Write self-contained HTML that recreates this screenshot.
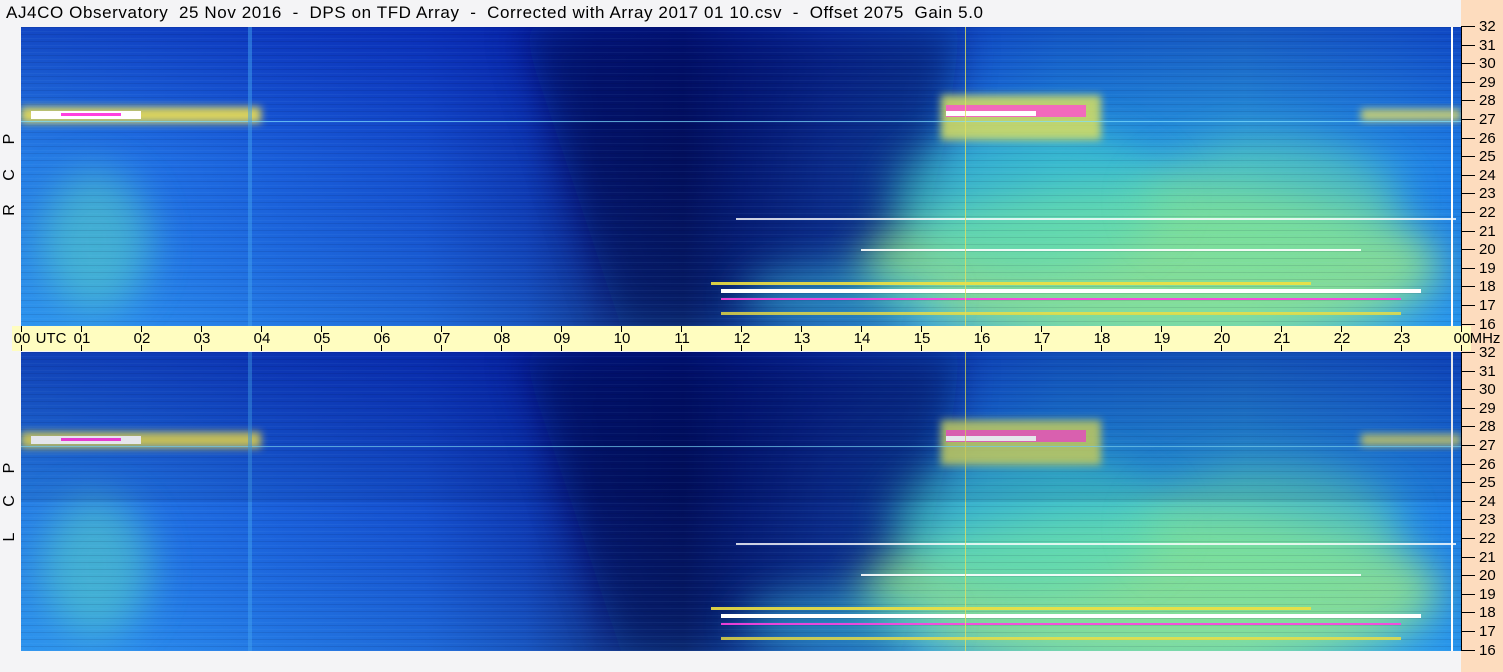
<!DOCTYPE html>
<html><head><meta charset="utf-8">
<style>
html,body{margin:0;padding:0}
body{width:1503px;height:672px;background:#f4f4f6;position:relative;overflow:hidden;font-family:"Liberation Sans",sans-serif;color:#000}
.title{position:absolute;left:6px;top:3px;font-size:17px;white-space:pre;letter-spacing:0.6px}
.panel{position:absolute;left:21px;width:1440px;height:299px}
.peach{position:absolute;left:1461px;top:0;width:42px;height:672px;background:#fddcbe}
.vline{position:absolute;left:1461px;width:1px;background:#000}
.tick{position:absolute;left:1461px;width:14px;height:1px;background:#000}
.lab{position:absolute;left:1479px;font-size:15px;line-height:15px}
.band{position:absolute;left:12px;top:326px;width:1459px;height:25px;background:#fffdc0}
.ht{position:absolute;font-size:15px;top:330px;transform:translateX(-50%)}
.hk{position:absolute;width:1px;background:#000}
.side{position:absolute;left:2px;font-size:16px;transform:rotate(-90deg);width:16px;text-align:center}
</style></head><body>
<div class="title">AJ4CO Observatory  25 Nov 2016  -  DPS on TFD Array  -  Corrected with Array 2017 01 10.csv  -  Offset 2075  Gain 5.0</div>
<div class="peach"></div>

<svg width="0" height="0" style="position:absolute">
<defs>
<linearGradient id="hg" x1="0" x2="1" y1="0" y2="0">
<stop offset="0" stop-color="#2a8aee"/><stop offset="0.08" stop-color="#247cec"/>
<stop offset="0.18" stop-color="#1c66e0"/><stop offset="0.28" stop-color="#1654d2"/>
<stop offset="0.35" stop-color="#0f3cb4"/><stop offset="0.4" stop-color="#081c80"/>
<stop offset="0.46" stop-color="#061266"/><stop offset="0.5" stop-color="#0c2a9c"/>
<stop offset="0.56" stop-color="#1a54d4"/><stop offset="0.63" stop-color="#2080ea"/>
<stop offset="0.72" stop-color="#28a4ec"/><stop offset="0.85" stop-color="#30b0e8"/>
<stop offset="0.95" stop-color="#2898ec"/><stop offset="1" stop-color="#2088ec"/></linearGradient>
<linearGradient id="vg" x1="0" x2="0" y1="0" y2="1">
<stop offset="0" stop-color="#0010a0" stop-opacity="0.55"/><stop offset="0.45" stop-color="#0010a0" stop-opacity="0.1"/>
<stop offset="1" stop-color="#40c0f0" stop-opacity="0.2"/></linearGradient>
<filter id="b20" x="-50%" y="-50%" width="200%" height="200%"><feGaussianBlur stdDeviation="20"/></filter>
<filter id="b6" x="-20%" y="-50%" width="140%" height="200%"><feGaussianBlur stdDeviation="4"/></filter>
<pattern id="hl" width="1440" height="7" patternUnits="userSpaceOnUse"><rect width="1440" height="1" fill="#000830" opacity="0.1"/><rect y="4" width="1440" height="1" fill="#80c0ff" opacity="0.06"/></pattern>
<g id="spec">
<rect width="1440" height="299" fill="url(#hg)"/>
<rect width="1440" height="299" fill="url(#vg)"/>
<polygon points="500,0 940,0 925,110 880,299 700,299 600,299" fill="#040c50" opacity="0.55" filter="url(#b20)"/>
<ellipse cx="1130" cy="240" rx="290" ry="80" fill="#a0f080" opacity="0.75" filter="url(#b20)"/>
<ellipse cx="1010" cy="170" rx="140" ry="70" fill="#48d8c0" opacity="0.55" filter="url(#b20)"/>
<ellipse cx="1250" cy="175" rx="130" ry="60" fill="#70e0a0" opacity="0.5" filter="url(#b20)"/>
<ellipse cx="820" cy="270" rx="100" ry="30" fill="#40c8e0" opacity="0.55" filter="url(#b20)"/>
<ellipse cx="75" cy="215" rx="55" ry="70" fill="#60e0c0" opacity="0.5" filter="url(#b20)"/>
<rect width="1440" height="299" fill="url(#hl)"/>
<rect x="0" y="80" width="240" height="16" fill="#f0e050" opacity="0.9" filter="url(#b6)"/>
<rect x="10" y="84" width="110" height="8" fill="#ffffff"/>
<rect x="40" y="86" width="60" height="3" fill="#ff40e0"/>
<rect x="920" y="68" width="160" height="45" fill="#d8e060" opacity="0.85" filter="url(#b6)"/>
<rect x="925" y="78" width="140" height="12" fill="#ff50d0" opacity="0.8"/>
<rect x="925" y="84" width="90" height="5" fill="#ffffff"/>
<rect x="1340" y="82" width="100" height="12" fill="#e8e060" opacity="0.8" filter="url(#b6)"/>
<rect x="0" y="94" width="1440" height="1" fill="#80e0ff" opacity="0.7"/>
<rect x="715" y="191" width="720" height="2" fill="#ffffff" opacity="0.8"/>
<rect x="700" y="262" width="700" height="4" fill="#ffffff"/>
<rect x="700" y="271" width="680" height="2" fill="#ff40e0" opacity="0.9"/>
<rect x="690" y="255" width="600" height="3" fill="#f0e040" opacity="0.9"/>
<rect x="700" y="285" width="680" height="3" fill="#f0e040" opacity="0.8"/>
<rect x="840" y="222" width="500" height="2" fill="#ffffff" opacity="0.9"/>
<rect x="944" y="0" width="1" height="299" fill="#e0e060" opacity="0.8"/>
<rect x="1430" y="0" width="2" height="299" fill="#ffffff"/>
<rect x="227" y="0" width="4" height="299" fill="#40a0f0" opacity="0.5"/>
</g>
</defs></svg>

<svg class="panel" style="top:27px" viewBox="0 0 1440 299"><use href="#spec"/></svg>
<svg class="panel" style="top:352px" viewBox="0 0 1440 299"><use href="#spec"/><rect width="1440" height="150" fill="#000840" opacity="0.1"/></svg>

<div class="vline" style="top:27px;height:299px"></div>
<div class="vline" style="top:352px;height:299px"></div>

<div class="band"></div>
<div id="ticks"></div>

<div class="side" style="top:130px">P</div>
<div class="side" style="top:166px">C</div>
<div class="side" style="top:201px">R</div>
<div class="side" style="top:459px">P</div>
<div class="side" style="top:492px">C</div>
<div class="side" style="top:528px">L</div>

<script>
var h='';
for(var i=0;i<=16;i++){
 var y1=Math.round(26+i*18.6), y2=Math.round(352+i*18.6), v=32-i;
 h+='<div class="tick" style="top:'+y1+'px"></div><div class="lab" style="top:'+(y1-7)+'px">'+v+'</div>';
 h+='<div class="tick" style="top:'+y2+'px"></div><div class="lab" style="top:'+(y2-7)+'px">'+v+'</div>';
}
for(var k=0;k<=24;k++){
 var x=21+k*60;
 h+='<div class="hk" style="left:'+x+'px;top:326px;height:6px"></div><div class="hk" style="left:'+x+'px;top:345px;height:6px"></div>';
 var t=(k%24<10?'0':'')+(k%24);
 h+='<div class="ht" style="left:'+(x+1)+'px">'+t+'</div>';
}
h+='<div class="ht" style="left:51px">UTC</div><div class="ht" style="left:1485px">MHz</div>';
document.getElementById('ticks').innerHTML=h;
</script>
</body></html>
